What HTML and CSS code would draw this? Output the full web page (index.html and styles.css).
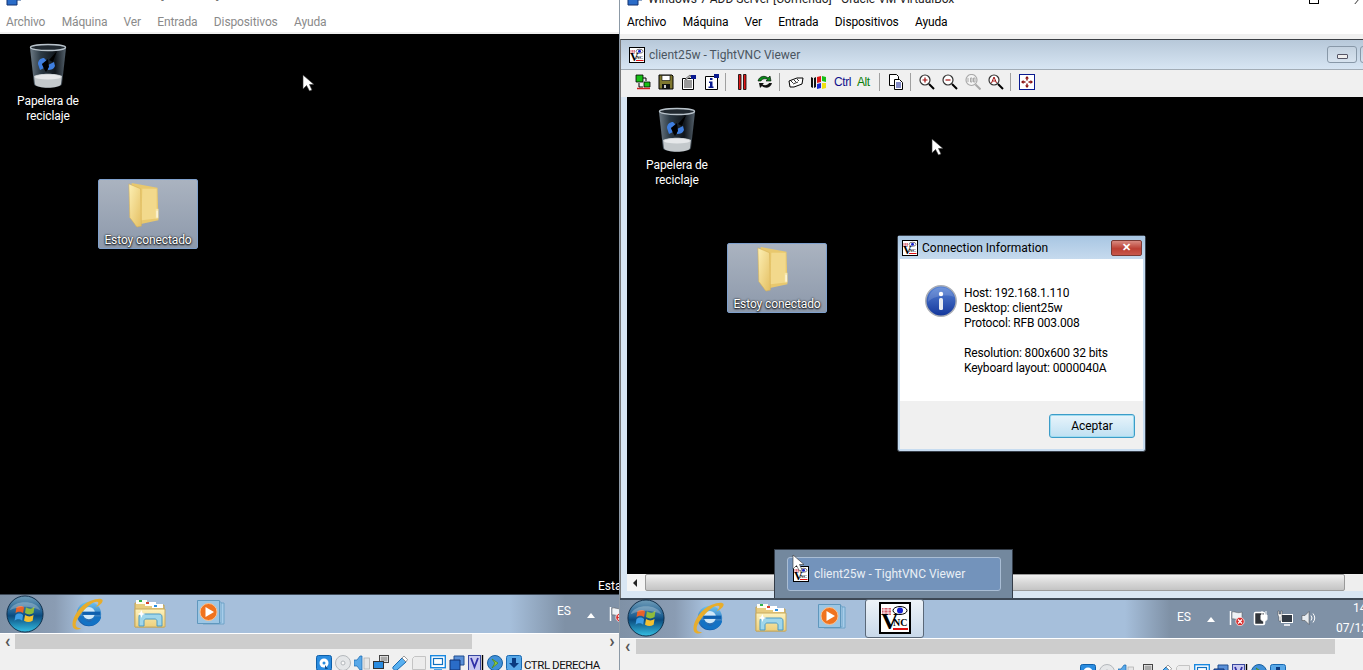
FILE: index.html
```html
<!DOCTYPE html>
<html lang="es">
<head>
<meta charset="utf-8">
<title>VirtualBox TightVNC</title>
<link rel="stylesheet" href="styles.css">
</head>
<body>
<svg class="defs" aria-hidden="true">
  <defs>
    <linearGradient id="gOrb" x1="0" y1="0" x2="0" y2="1"><stop offset="0" stop-color="#6f9cb8"/><stop offset=".45" stop-color="#1d5f92"/><stop offset=".55" stop-color="#0b4a7d"/><stop offset="1" stop-color="#35c0e4"/></linearGradient>
    <linearGradient id="gBin" x1="0" y1="0" x2="1" y2="0"><stop offset="0" stop-color="#6d7a85"/><stop offset=".3" stop-color="#2c3a45"/><stop offset=".7" stop-color="#10161c"/><stop offset="1" stop-color="#55626d"/></linearGradient>
    <linearGradient id="gFolder" x1="0" y1="0" x2="1" y2="1"><stop offset="0" stop-color="#fdf0b4"/><stop offset="1" stop-color="#e4bf62"/></linearGradient>
    <linearGradient id="gExp" x1="0" y1="0" x2="0" y2="1"><stop offset="0" stop-color="#fdf2bd"/><stop offset="1" stop-color="#ecd07e"/></linearGradient>
    <linearGradient id="gInfo" x1="0" y1="0" x2="0" y2="1"><stop offset="0" stop-color="#5a86d8"/><stop offset="1" stop-color="#12359a"/></linearGradient>
    <linearGradient id="gIe" x1="0" y1="0" x2="0" y2="1"><stop offset="0" stop-color="#6ec4f2"/><stop offset="1" stop-color="#0d4fa0"/></linearGradient>

    <symbol id="i-bin" viewBox="0 0 38 46">
      <path d="M1 5 C1 1 37 1 37 5 L33 41 C32 46 6 46 5 41 Z" fill="url(#gBin)"/>
      <ellipse cx="19" cy="4.500" rx="17.500" ry="3" fill="#20282f" stroke="#b9c3cb" stroke-width="1.400"/>
      <path d="M5 33 C10 30 28 30 33 33 L32 41 C31 46 7 46 6 41 Z" fill="#c4c9cc"/>
      <ellipse cx="19" cy="34" rx="13" ry="2.500" fill="#e6e8ea"/>
      <path d="M9 21 C9 17 12 15 15 15 L18 18 L13 21 L15 25 L11 27 Z M19 22 L25 19 L26 23 C25 26 22 27 19 27 Z" fill="#3f7fe0"/>
      <path d="M13 21 l6 -5 l1 8 l-3 5 l-2 -3 Z M20 17 l8 -9 l-4 11 Z" fill="#000"/>
    </symbol>
    <symbol id="i-folder" viewBox="0 0 38 48" preserveAspectRatio="none">
      <path d="M4 1 L33 6 L34 40 L8 45 Z" fill="#e8c86e"/>
      <path d="M16 7 L32 7 L32 38 L15 40 Z" fill="#f2d98c"/>
      <path d="M1 2 L14 7 L15 46 L10 47 L2 37 Z" fill="url(#gFolder)" stroke="#d8b255" stroke-width=".6"/>
      <path d="M31 28 h3 v10 h-3 z" fill="#f7e6a8"/><path d="M32 30 h1 v7 h-1 z" fill="#fff"/>
    </symbol>
    <symbol id="i-orb" viewBox="0 0 40 40">
      <circle cx="20" cy="20" r="19" fill="url(#gOrb)" stroke="#0f2c48" stroke-width="1"/>
      <path d="M11 13 C14 11 17 11 19 13 L18 19 C15 17 13 17 10 19 Z" fill="#e9622a"/>
      <path d="M21 13 C24 15 27 15 30 12 L29 19 C26 21 23 21 20 19 Z" fill="#8fbb3a"/>
      <path d="M10 21 C13 19 15 19 18 21 L17 27 C14 25 12 25 9 27 Z" fill="#3d9ee6"/>
      <path d="M20 21 C23 23 26 23 29 21 L28 27 C25 29 22 29 19 27 Z" fill="#f4c02f"/>
      <path d="M4 16 C8 5 32 5 36 16 C26 11 14 11 4 16 Z" fill="#fff" opacity=".25"/>
    </symbol>
    <symbol id="i-ie" viewBox="0 0 36 36">
      <circle cx="20" cy="18" r="13" fill="url(#gIe)"/>
      <circle cx="20" cy="17" r="6.500" fill="#cfe8f8"/>
      <rect x="13" y="15.500" width="19" height="3.500" fill="#0e5fae"/>
      <path d="M25 21 h8 c-1 6 -7 10 -13 9.500 c-6 0 -10 -5 -10.500 -10 l5 0 c.5 3 3 6 6 6 c2 0 4 -2 5 -5.500 Z" fill="#1372c4"/>
      <path d="M4 33 C-1 28 8 9 22 4 C28 1.500 34 1 34.500 3.500 C35 6 31 9 27 11 C30 8 31 5.500 29 5 C22 3.500 6 22 6 29 C6 32 9 33 12 33 C9 35 6 35 4 33 Z" fill="#e8ad2b"/>
    </symbol>
    <symbol id="i-exp" viewBox="0 0 32 30">
      <path d="M1 4 h10 l2 2 h17 v22 h-29 z" fill="#e8cc7e" stroke="#c0a258"/>
      <path d="M2 1 h11 v4 h-11 z" fill="#fdfdf5"/><path d="M5 1 h3 v2 h-3 z" fill="#33b24a"/>
      <path d="M11 3 h11 v4 h-11 z" fill="#fff"/><path d="M12 3 h3 v2 h-3 z" fill="#d8452c"/>
      <path d="M18 5 h11 v4 h-11 z" fill="#fff"/><path d="M20 6 h3 v2 h-3 z" fill="#2a8fe0"/>
      <path d="M1 10 h30 v18 h-30 z" fill="url(#gExp)" stroke="#c8aa60"/>
      <path d="M5 27 v-9 c0 -2 1 -3 3 -3 h17 c2 0 3 1 3 3 v9 h-5 v-5 c0 -1 -1 -2 -2 -2 h-9 c-1 0 -2 1 -2 2 v5 z" fill="#9fd6ea" stroke="#4b99c4"/>
      <path d="M6 14 l1.500 -3 l1 3 l3 1 l-3 1 l-1 3 l-1 -3 l-3 -1 z" fill="#fff"/>
    </symbol>
    <symbol id="i-wmp" viewBox="0 0 30 28">
      <path d="M6 3 h21 v21 h-21 z" fill="#a7cdea" stroke="#6fa3c8"/>
      <path d="M3 2 h21 v21 h-21 z" fill="#b5d6ee" stroke="#6fa3c8"/>
      <path d="M0.500 .500 h22 v23 h-22 z" fill="#9cc6e4" stroke="#5f97bd"/>
      <circle cx="11.500" cy="12" r="8.500" fill="#f0731f" stroke="#fbc08e"/>
      <path d="M8.500 7 L17 12 L8.500 17 Z" fill="#fff"/>
    </symbol>
    <symbol id="i-vnc" viewBox="0 0 32 32">
      <rect x="1" y="1" width="30" height="30" fill="#fff" stroke="#000" stroke-width="2"/>
      <path d="M3 6 h9 v7 h-9 z" fill="#c8283a" opacity=".75"/>
      <path d="M3 8 h9 M3 11 h9 M5 6 v7 M9 6 v7" stroke="#fff" stroke-width=".8"/>
      <ellipse cx="21" cy="8.500" rx="7" ry="4" fill="#fff" stroke="#000"/>
      <circle cx="21" cy="8.500" r="3" fill="#1520d0"/>
      <text x="2" y="27" class="vnc-v">V</text><text x="14" y="24" class="vnc-nc">NC</text>
      <rect x="14" y="26" width="15" height="2" fill="#e01010"/>
    </symbol>
    <symbol id="i-cursor" viewBox="0 0 13 18">
      <path d="M1 1 V15 L4.500 11.500 L7.500 17 L10 16 L7.500 10.500 L12 10.500 Z" fill="#fff" stroke="#333" stroke-width=".6"/>
    </symbol>
    <symbol id="i-info" viewBox="0 0 32 32">
      <circle cx="16" cy="16" r="15.200" fill="url(#gInfo)" stroke="#a9adb5" stroke-width="1.500"/>
      <path d="M3 17 C8 11 22 9 29 12 C27 5 21 2 15 2.500 C8 3 3 9 3 17 Z" fill="#fff" opacity=".15"/>
      <circle cx="16" cy="9" r="2.200" fill="#fff"/><rect x="14" y="13" width="4" height="12" rx="1.500" fill="#e8ecf2"/>
    </symbol>
    <symbol id="i-flag" viewBox="0 0 16 16">
      <path d="M1.500 1 v14" stroke="#fff" stroke-width="1.500"/><path d="M3 2 c3 -1 5 2 10 0 v7 c-5 2 -7 -1 -10 0 z" fill="#eef2f6" stroke="#555" stroke-width=".5"/>
      <circle cx="11" cy="11.500" r="4.200" fill="#d92a2a" stroke="#fff" stroke-width=".7"/><path d="M9 9.500 l4 4 m0 -4 l-4 4" stroke="#fff" stroke-width="1.200"/>
    </symbol>
    <symbol id="i-power" viewBox="0 0 16 16">
      <rect x="1.500" y="2.500" width="10" height="12" rx="1" fill="#30343a" stroke="#fff" stroke-width="1.500"/>
      <path d="M9 1 v4 M13 1 v4 M8 5 h6 v4 c0 1 -1 2 -3 2 s-3 -1 -3 -2 z" fill="#fff" stroke="#fff"/><path d="M11 11 v3" stroke="#fff" stroke-width="1.500"/>
    </symbol>
    <symbol id="i-net" viewBox="0 0 16 16">
      <rect x="4.500" y="4.500" width="11" height="8" fill="#333b45" stroke="#fff"/><path d="M7 15 h6" stroke="#fff" stroke-width="1.500"/>
      <path d="M1 1 h1 v3 h2 v-3 h1 v4 l-1 2 v4 h-2 v-4 l-1 -2 z" fill="#fff" stroke="#333" stroke-width=".4"/>
    </symbol>
    <symbol id="i-sound" viewBox="0 0 16 16">
      <path d="M1 5.500 h3 l4 -4 v13 l-4 -4 h-3 z" fill="#e8ecf0" stroke="#444" stroke-width=".5"/>
      <path d="M10 5.500 q2 2.500 0 5 M12 3.500 q3.500 4.500 0 9" stroke="#fff" fill="none"/>
    </symbol>

    <symbol id="t-conn" viewBox="0 0 16 16"><path d="M1 1 h7 v7 h-7 z" fill="#18c018" stroke="#000" stroke-width=".8"/><path d="M9 8 h6 v5 h-6 z" fill="#18c018" stroke="#000" stroke-width=".8"/><path d="M8 4 h3 v3 M4 9 v4 h4" fill="none" stroke="#000"/><path d="M2 14.500 h13" stroke="#d02020" stroke-width="1.500"/></symbol>
    <symbol id="t-save" viewBox="0 0 16 16"><path d="M1 1 h13 l1 1 v13 h-14 z" fill="#807830" stroke="#000"/><path d="M4 1.500 h8 v5 h-8 z" fill="#fff" stroke="#000" stroke-width=".6"/><path d="M4 10 h8 v5 h-8 z" fill="#111"/><path d="M6 11 h2 v3 h-2 z" fill="#ccc"/></symbol>
    <symbol id="t-prop" viewBox="0 0 16 16"><path d="M1.500 4.500 h11 v11 h-11 z" fill="#fff" stroke="#000"/><path d="M3 7 h8 M3 9 h8 M3 11 h8 M3 13 h8" stroke="#000" stroke-width=".8"/><path d="M10 1 h5 v4 h-5 z" fill="#0a1a90"/><path d="M4 5 l5 -4 l1 1 l-5 4 z" fill="#ddd" stroke="#000" stroke-width=".5"/></symbol>
    <symbol id="t-info" viewBox="0 0 16 16"><path d="M1.500 2.500 h9 l3 0 v13 h-12 z" fill="#fff" stroke="#000"/><path d="M10 0 h5 v4 h-5 z" fill="#0a1a90"/><path d="M6 4 h2.500 v2 h-2.500 z M5 7.500 h3.500 v5 h1 v1.500 h-5 v-1.500 h1.500 v-3.500 h-1 z" fill="#0a1a90"/></symbol>
    <symbol id="t-pause" viewBox="0 0 16 16"><path d="M4.500 0.500 h2.500 v15 h-2.500 z M9.500 .5 h2.500 v15 h-2.500 z" fill="#e01818" stroke="#000" stroke-width=".8"/></symbol>
    <symbol id="t-refresh" viewBox="0 0 16 16"><path d="M1 7 C2 2 8 1 11 4 L13 2 L14 7 H9 L10.500 5.500 C8 4 5 5 4 7 Z" fill="#0a8a1a" stroke="#000" stroke-width=".6"/><path d="M15 9 C14 14 8 15 5 12 L3 14 L2 9 H7 L5.500 10.500 C8 12 11 11 12 9 Z" fill="#111"/></symbol>
    <symbol id="t-cad" viewBox="0 0 16 16"><path d="M1 7 l8 -3 l6 0 l-1 6 l-8 3 h-4 z" fill="#fff" stroke="#000"/><path d="M3 7 l2 2 M6 6 l2 2 M9 5 l2 2 M5 10 l5 -2" stroke="#000" stroke-width=".8"/></symbol>
    <symbol id="t-win" viewBox="0 0 16 16"><path d="M0 3 l2 1 v10 l-2 -1 z M3 4 l2 -1 v10 l-2 1 z" fill="#111"/><path d="M6 3 l4 -1 v6 l-4 1 z" fill="#e01818"/><path d="M11 2 l4 1 v5 l-4 -1 z" fill="#18c018"/><path d="M6 10 l4 -1 v5 l-4 1 z" fill="#1828d0"/><path d="M11 9 l4 0 v5 l-4 1 z" fill="#f0e010"/></symbol>
    <symbol id="t-clip" viewBox="0 0 16 16"><path d="M1.500 .5 h7 l2 2 v9 h-9 z" fill="#fff" stroke="#000"/><path d="M6.500 5.500 h5 l3 3 v7 h-8 z" fill="#fff" stroke="#000"/><path d="M8 9 h5 M8 11 h5 M8 13 h5" stroke="#0a1a90"/></symbol>
    <symbol id="t-zin" viewBox="0 0 16 16"><circle cx="6" cy="6" r="5" fill="#fff" stroke="#333" stroke-width="1.200"/><path d="M3.500 6 h5 M6 3.500 v5" stroke="#a01010" stroke-width="1.200"/><path d="M10 10 l5 5" stroke="#000" stroke-width="2"/></symbol>
    <symbol id="t-zout" viewBox="0 0 16 16"><circle cx="6" cy="6" r="5" fill="#fff" stroke="#333" stroke-width="1.200"/><path d="M3.500 6 h5" stroke="#a01010" stroke-width="1.200"/><path d="M10 10 l5 5" stroke="#000" stroke-width="2"/></symbol>
    <symbol id="t-z100" viewBox="0 0 16 16"><circle cx="6.500" cy="6" r="5.500" fill="#f4f4f4" stroke="#aaa" stroke-width="1.200"/><path d="M3 4 v4 M5.500 4 h1.500 v4 h-1.500 z M8.500 4 h1.500 v4 h-1.500 z" fill="none" stroke="#aaa"/><path d="M10.500 10.500 l5 5" stroke="#aaa" stroke-width="2"/></symbol>
    <symbol id="t-zauto" viewBox="0 0 16 16"><circle cx="6" cy="6" r="5" fill="#fff" stroke="#333" stroke-width="1.200"/><path d="M3.500 9 L6 3 L8.500 9 M4.500 7 h3" fill="none" stroke="#a01010"/><path d="M10 10 l5 5" stroke="#000" stroke-width="2"/></symbol>
    <symbol id="t-full" viewBox="0 0 16 16"><rect x=".5" y=".5" width="15" height="15" fill="#fff" stroke="#0a1a90"/><path d="M8 2 l2 2.500 h-1.300 v2 h-1.400 v-2 h-1.300 z M8 14 l2 -2.500 h-1.300 v-2 h-1.400 v2 h-1.300 z M2 8 l2.500 -2 v1.300 h2 v1.400 h-2 v1.300 z M14 8 l-2.500 -2 v1.300 h-2 v1.400 h2 v1.300 z" fill="#8a1010"/></symbol>

    <symbol id="s-hd" viewBox="0 0 16 16"><rect x=".5" y=".5" width="15" height="15" rx="2" fill="#2a8ce0" stroke="#0f5fa8"/><circle cx="8" cy="8" r="4.500" fill="#fff"/><circle cx="8" cy="8" r="1.500" fill="#2a8ce0"/><path d="M9 10 l3 4 h-3 z" fill="#0f4f90"/></symbol>
    <symbol id="s-cd" viewBox="0 0 16 16"><circle cx="8" cy="8" r="7.500" fill="#e4e6e8" stroke="#b4b8bc"/><circle cx="8" cy="8" r="2" fill="#f8f8f8" stroke="#b4b8bc"/></symbol>
    <symbol id="s-audio" viewBox="0 0 16 16"><path d="M0 5 h3 l3 -4 h2 v14 h-2 l-3 -4 h-3 z" fill="#58a8e8" stroke="#1868b0" stroke-width=".7"/><rect x="10" y="3" width="5.500" height="11" fill="#e6e6e6" stroke="#aaa" stroke-width=".7"/></symbol>
    <symbol id="s-net" viewBox="0 0 16 16"><rect x="6.500" y=".5" width="9" height="7" fill="#fff" stroke="#444"/><rect x="7.500" y="1.500" width="7" height="5" fill="#aaa"/><rect x=".5" y="6.500" width="10" height="7" fill="#2a8ce0" stroke="#333"/><path d="M3 15.500 h6" stroke="#333"/></symbol>
    <symbol id="s-usb" viewBox="0 0 16 16"><path d="M1 12 L10 3 L14 7 L5 15 C3 16 0 14 1 12 Z" fill="#58b0f0" stroke="#1868b0"/><path d="M10 3 L12 1 L15.500 4.500 L14 7 Z" fill="#fff" stroke="#777" stroke-width=".7"/></symbol>
    <symbol id="s-share" viewBox="0 0 16 16"><path d="M1.500 3.500 l2 -2 h11 v13 h-13 z" fill="#ececec" stroke="#c4c4c4"/></symbol>
    <symbol id="s-screen" viewBox="0 0 16 16"><rect x=".7" y=".7" width="14.600" height="12" fill="#fff" stroke="#1888e0" stroke-width="1.400"/><rect x="3.500" y="3.500" width="9" height="6" fill="#fff" stroke="#1070c0" stroke-width="1.200"/><path d="M4 15 h8" stroke="#1888e0" stroke-width="1.500"/></symbol>
    <symbol id="s-screens" viewBox="0 0 16 16"><path d="M5 1 h10 v9 h-10 z" fill="#5a90d8" stroke="#204f90"/><path d="M1 5 h10 v10 h-10 z" fill="#2a6cc8" stroke="#103070"/></symbol>
    <symbol id="s-v" viewBox="0 0 16 16"><rect x=".5" y=".5" width="12" height="15" fill="#c8c8f0" stroke="#3848a0"/><path d="M3 3 L6.500 12 L10 3" fill="none" stroke="#3030a8" stroke-width="1.800"/><path d="M14.500 0 v16" stroke="#000" stroke-width="1.400"/></symbol>
    <symbol id="s-globe" viewBox="0 0 16 16"><circle cx="8" cy="8" r="7.500" fill="#3f90d8" stroke="#1860a0"/><path d="M5 4 L11 8 L5 13 L8 8 Z" fill="#9ad040" stroke="#4c8a18" stroke-width=".8"/></symbol>
    <symbol id="s-down" viewBox="0 0 16 16"><rect x=".5" y=".5" width="15" height="15" rx="2" fill="#58a8e8" stroke="#1868b0"/><path d="M6 3 h4 v5 h3 L8 13 L3 8 h3 z" fill="#0a3a80"/></symbol>
  </defs>
</svg>

<main class="stage">
  <section class="vm vm-client">
    <header class="vm-title vm-title-off"><svg class="vm-icon"><use href="#s-screens"/></svg><span class="vm-title-text vm-title-client">Windows 7 Cliente [Corriendo] - Oracle VM VirtualBox</span></header>
    <nav class="vm-menu vm-menu-off"><span>Archivo</span><span>Máquina</span><span>Ver</span><span>Entrada</span><span>Dispositivos</span><span>Ayuda</span></nav>
    <div class="screen">
      <div class="desk">
        <div class="desk-item desk-bin"><svg class="bin-img"><use href="#i-bin"/></svg><span>Papelera de<br>reciclaje</span></div>
        <div class="desk-item desk-folder"><svg class="folder-img"><use href="#i-folder"/></svg><span>Estoy conectado</span></div>
        <svg class="cursor cursor-desk"><use href="#i-cursor"/></svg>
      </div>
      <span class="status-clip">Estado</span>
    </div>
    <div class="taskbar taskbar-client">
      <svg class="orb"><use href="#i-orb"/></svg>
      <svg class="tb-ie"><use href="#i-ie"/></svg>
      <svg class="tb-exp"><use href="#i-exp"/></svg>
      <svg class="tb-wmp"><use href="#i-wmp"/></svg>
      <span class="tray-lang tray-lang-client">ES</span>
      <span class="tray-up"></span>
      <svg class="tray-icon tray-flag-client"><use href="#i-flag"/></svg>
    </div>
    <div class="hscroll hscroll-client"><span class="h-arrow">‹</span><span class="h-track h-track-client"></span><span class="h-arrow h-arrow-right">›</span></div>
    <footer class="vm-status vm-status-client">
      <svg class="st"><use href="#s-hd"/></svg><svg class="st"><use href="#s-cd"/></svg><svg class="st"><use href="#s-audio"/></svg><svg class="st"><use href="#s-net"/></svg><svg class="st"><use href="#s-usb"/></svg><svg class="st"><use href="#s-share"/></svg><svg class="st"><use href="#s-screen"/></svg><svg class="st"><use href="#s-screens"/></svg><svg class="st"><use href="#s-v"/></svg><svg class="st"><use href="#s-globe"/></svg><svg class="st"><use href="#s-down"/></svg><span class="st-key">CTRL DERECHA</span>
    </footer>
  </section>

  <section class="vm vm-server">
    <header class="vm-title"><svg class="vm-icon"><use href="#s-screens"/></svg><span class="vm-title-text">Windows 7 ADD Server [Corriendo] - Oracle VM VirtualBox</span><span class="vm-spacer"></span><span class="vm-max"></span><span class="vm-close"></span></header>
    <nav class="vm-menu"><span>Archivo</span><span>Máquina</span><span>Ver</span><span>Entrada</span><span>Dispositivos</span><span>Ayuda</span></nav>
    <div class="menu-strip"></div>
    <div class="screen screen-server">
      <div class="vnc">
        <div class="vnc-title">
          <svg class="vnc-app-icon"><use href="#i-vnc"/></svg>
          <span class="vnc-title-text">client25w - TightVNC Viewer</span>
          <span class="vm-spacer"></span>
          <span class="cap-btn"><i class="cap-min"></i></span>
          <span class="cap-btn"><i class="cap-res"></i></span>
        </div>
        <div class="vnc-tools">
          <svg class="tool"><use href="#t-conn"/></svg><svg class="tool"><use href="#t-save"/></svg><svg class="tool"><use href="#t-prop"/></svg><svg class="tool"><use href="#t-info"/></svg>
          <i class="sep sep-first"></i>
          <svg class="tool"><use href="#t-pause"/></svg><svg class="tool"><use href="#t-refresh"/></svg>
          <i class="sep"></i>
          <svg class="tool"><use href="#t-cad"/></svg><svg class="tool"><use href="#t-win"/></svg><span class="tool tool-ctrl">Ctrl</span><span class="tool tool-alt">Alt</span>
          <i class="sep"></i>
          <svg class="tool"><use href="#t-clip"/></svg>
          <i class="sep"></i>
          <svg class="tool"><use href="#t-zin"/></svg><svg class="tool"><use href="#t-zout"/></svg><svg class="tool"><use href="#t-z100"/></svg><svg class="tool"><use href="#t-zauto"/></svg>
          <i class="sep"></i>
          <svg class="tool"><use href="#t-full"/></svg>
        </div>
        <div class="vnc-view">
          <div class="desk desk-remote">
            <div class="desk-item desk-bin"><svg class="bin-img"><use href="#i-bin"/></svg><span>Papelera de<br>reciclaje</span></div>
            <div class="desk-item desk-folder"><svg class="folder-img"><use href="#i-folder"/></svg><span>Estoy conectado</span></div>
            <svg class="cursor cursor-desk"><use href="#i-cursor"/></svg>
          </div>
        </div>
        <div class="vnc-scroll"><span class="vs-arrow"></span><span class="vs-thumb"></span></div>
      </div>

      <div class="dialog">
        <div class="dlg-title">
          <svg class="dlg-icon"><use href="#i-vnc"/></svg>
          <span class="dlg-title-text">Connection Information</span>
          <span class="vm-spacer"></span>
          <span class="dlg-close">✕</span>
        </div>
        <div class="dlg-body">
          <svg class="dlg-info"><use href="#i-info"/></svg>
          <p class="dlg-text">Host: 192.168.1.110<br>Desktop: client25w<br>Protocol: RFB 003.008<br><br>Resolution: 800x600 32 bits<br>Keyboard layout: 0000040A</p>
        </div>
        <div class="dlg-foot"><button class="dlg-btn">Aceptar</button></div>
      </div>

      <div class="peek">
        <div class="peek-item"><svg class="peek-icon"><use href="#i-vnc"/></svg><span>client25w - TightVNC Viewer</span></div>
      </div>
      <svg class="cursor cursor-peek"><use href="#i-cursor"/></svg>
    </div>
    <div class="taskbar taskbar-server">
      <svg class="orb"><use href="#i-orb"/></svg>
      <svg class="tb-ie"><use href="#i-ie"/></svg>
      <svg class="tb-exp"><use href="#i-exp"/></svg>
      <svg class="tb-wmp"><use href="#i-wmp"/></svg>
      <span class="tb-vnc"><svg class="tb-vnc-img"><use href="#i-vnc"/></svg></span>
      <span class="vm-spacer"></span>
      <span class="tray-lang">ES</span>
      <span class="tray-up"></span>
      <svg class="tray-icon"><use href="#i-flag"/></svg><svg class="tray-icon"><use href="#i-power"/></svg><svg class="tray-icon"><use href="#i-net"/></svg><svg class="tray-icon"><use href="#i-sound"/></svg>
      <span class="clock">14:25<br>07/12/2017</span>
    </div>
    <div class="hscroll hscroll-server"><span class="h-arrow">‹</span><span class="h-track h-track-server"></span></div>
    <footer class="vm-status vm-status-server">
      <svg class="st"><use href="#s-hd"/></svg><svg class="st"><use href="#s-cd"/></svg><svg class="st"><use href="#s-audio"/></svg><svg class="st"><use href="#s-net"/></svg><svg class="st"><use href="#s-usb"/></svg><svg class="st"><use href="#s-share"/></svg><svg class="st"><use href="#s-screen"/></svg><svg class="st"><use href="#s-screens"/></svg><svg class="st"><use href="#s-v"/></svg><svg class="st"><use href="#s-globe"/></svg><svg class="st"><use href="#s-down"/></svg><span class="st-key">CTRL DERECHA</span>
    </footer>
  </section>
</main>
</body>
</html>
```

FILE: styles.css
```css
* { box-sizing: border-box; }
html, body { margin: 0; height: 100%; overflow: hidden; background: #fff; }
body { font-family: Roboto, "Noto Sans", sans-serif; font-size: 12px; color: #000; }
.defs { position: absolute; width: 0; height: 0; }
.vnc-v { font: bold 24px "Liberation Serif", serif; fill: #000; }
.vnc-nc { font: bold 10px "Liberation Serif", serif; fill: #000; }
svg { display: block; flex: none; }

.stage { position: relative; width: 1363px; height: 670px; overflow: hidden; }
.vm { position: absolute; top: 0; height: 670px; display: flex; flex-direction: column; overflow: hidden; background: #fff; }
.vm-client { left: 0; width: 619px; }
.vm-server { left: 619px; width: 744px; border-left: 1px solid #8c99a6; }

.vm-title { height: 12px; flex: none; display: flex; align-items: flex-start; padding-left: 7px; overflow: hidden; }
.vm-icon { width: 16px; height: 16px; margin-top: -10px; }
.vm-title-text { margin: -9px 0 0 5px; line-height: 16px; font-size: 12px; white-space: nowrap; color: #222; }
.vm-title-client { margin: -13px 0 0 37px; color: #777; }
.vm-title-off { padding-left: 6px; }
.vm-spacer { flex: 1; }
.vm-max { width: 10px; height: 4px; border: 1px solid #000; border-top: 0; margin-right: 37px; }
.vm-close { width: 7px; height: 4px; border-left: 1px solid #333; transform: skewX(-40deg); }

.vm-menu { height: 22px; flex: none; display: flex; gap: 16.300px; padding: 0 0 0 7px; line-height: 20px; font-size: 12px; letter-spacing: -.12px; white-space: nowrap; background: #fff; }
.vm-menu-off { color: #8a8a8a; padding-left: 6px; border-bottom: 2px solid #f0f0f0; }
.menu-strip { height: 5px; flex: none; background: #f0f0f0; }

.screen { position: relative; flex: 1; min-height: 0; background: #000; }
.status-clip { position: absolute; right: 0; bottom: 0; width: 21px; overflow: hidden; color: #fff; font-size: 12px; line-height: 16px; }
.desk { position: absolute; inset: 0; }
.desk-remote { left: 2px; top: 1px; }
.desk-item { position: absolute; width: 100px; display: flex; flex-direction: column; align-items: center; color: #fff; font-size: 12px; letter-spacing: -.1px; line-height: 15px; text-align: center; text-shadow: 0 1px 2px #000; }
.desk-bin { left: -2px; top: 9px; }
.bin-img { width: 38px; height: 46px; margin-bottom: 5px; }
.desk-folder { left: 98px; top: 145px; height: 70px; border: 1px solid #7fa0cc; border-radius: 2px; background: linear-gradient(#aab3c0, #8d99ab); text-shadow: 0 0 2px #000, 0 1px 2px #000; }
.folder-img { width: 34px; height: 46px; margin: 2px 6px 5px 0; }
.cursor { position: absolute; }
.cursor-desk { left: 302px; top: 40px; width: 13px; height: 18px; }
.cursor-peek { left: 172px; top: 515px; width: 13px; height: 18px; }

.taskbar { height: 40px; flex: none; position: relative; display: flex; align-items: center; border-top: 1px solid #3d4855; border-bottom: 1px solid #fff; }
.taskbar-client { padding-left: 6px; background: linear-gradient(90deg, #7f91a6 0, #8a9cb3 55px, #a6bfdb 85px, #a6bfdb 510px, #7f91a6 565px); }
.taskbar-server { height: 41px; border-top: 2px solid #3d4855; background: linear-gradient(90deg, #7f91a6 0, #8a9cb3 55px, #a6bfdb 85px, #a6bfdb 505px, #7f91a6 550px); padding: 0 0 2px 7px; }
.orb { width: 38px; height: 38px; }
.tb-ie { width: 34px; height: 34px; margin-left: 26px; }
.tb-exp { width: 32px; height: 30px; margin-left: 30px; }
.tb-wmp { width: 30px; height: 28px; margin-left: 31px; }
.tb-vnc { width: 59px; height: 39px; margin-left: 17px; display: flex; align-items: center; justify-content: center; border: 1px solid #5a6878; border-radius: 3px; background: linear-gradient(#eef3f8, #c9d9ea); }
.tb-vnc-img { width: 32px; height: 32px; }
.tray-lang { color: #fff; font-size: 12px; margin-top: -3px; }
.tray-lang-client { margin-left: 330px; margin-top: -7px; }
.tray-up { width: 0; height: 0; border: 4px solid transparent; border-top: 0; border-bottom: 5px solid #fff; margin: 2px 0 0 16px; }
.tray-icon { width: 16px; height: 16px; margin-left: 8px; }
.tray-up + .tray-icon { margin-left: 14px; }
.clock { width: 47px; margin-left: 19px; margin-right: -20px; color: #fff; text-align: right; font-size: 12px; line-height: 20px; white-space: nowrap; overflow: hidden; }

.hscroll { height: 16px; flex: none; display: flex; background: #f0f0f0; }
.h-arrow { width: 15px; text-align: center; color: #555; font-size: 18px; font-weight: 700; line-height: 13px; }
.h-arrow-right { margin-left: auto; width: 14px; }
.h-track { background: #cdcdcd; height: 15px; }
.h-track-client { width: 457px; }
.h-track-server { width: 699px; margin-left: 1px; }
.vm-status { flex: none; display: flex; background: #f0f0f0; overflow: hidden; align-items: flex-start; gap: 3px; }
.vm-status-client { height: 20px; padding: 5px 0 0 316px; }
.vm-status-server { height: 15px; padding: 9px 0 0 460px; }
.st { width: 16px; height: 16px; }
.st-key { font-size: 11.500px; letter-spacing: -.45px; line-height: 12px; margin: 4px 0 0 -1px; white-space: nowrap; color: #111; }

.vnc { position: absolute; left: 0; top: 0; width: 770px; height: 559px; display: flex; flex-direction: column; background: #d9e6f3; border-top: 1px solid #3b3f44; border-left: 1px solid #777; padding-left: 6px; }
.vnc-title { height: 30px; flex: none; margin-left: -6px; padding-left: 8px; display: flex; align-items: center; background: linear-gradient(#b7c8d9, #d7e5f3); border-bottom: 1px solid #a2acb6; }
.vnc-app-icon { width: 16px; height: 16px; }
.vnc-title-text { margin-left: 4px; font-size: 12px; color: #4a5560; }
.cap-btn { width: 30px; height: 17px; margin-left: 3px; display: flex; align-items: center; justify-content: center; border: 1px solid #8898a8; border-radius: 3px; background: linear-gradient(#c4d2e0, #d7e3ef); }
.cap-min { display: block; width: 11px; height: 5px; background: #eee; border: 1px solid #556; border-radius: 1px; margin-top: 3px; }
.cap-res { display: block; width: 11px; height: 8px; background: #ddd; border: 2px solid #556; }
.vnc-tools { height: 27px; flex: none; margin-left: -6px; padding: 0 0 4px 14px; display: flex; align-items: center; gap: 7px; background: #f0f0f0; }
.tool { width: 16px; height: 16px; flex: none; }
.tool-ctrl, .tool-alt { font-family: "Liberation Sans", sans-serif; font-size: 12px; line-height: 16px; letter-spacing: -.4px; white-space: nowrap; }
.tool-ctrl { color: #10108c; }
.tool-alt { color: #0a800a; }
.sep { width: 1px; height: 18px; background: #a0a0a0; margin: 0 1px 0 -1px; }
.sep-first { margin-left: -2px; }
.vnc-view { position: relative; flex: 1; background: #000; min-height: 0; }
.vnc-scroll { height: 17px; flex: none; display: flex; background: #eee; margin-bottom: 7px; }
.vs-arrow { width: 18px; height: 17px; position: relative; background: #f4f4f4; }
.vs-arrow::before { content: ""; position: absolute; left: 6px; top: 5px; border: 4px solid transparent; border-left: 0; border-right: 4px solid #222; }
.vs-thumb { width: 700px; background: linear-gradient(#f1f1f1, #d8d8d8 50%, #c4c4c4); border: 1px solid #9a9a9a; border-radius: 2px; }

.dialog { position: absolute; left: 277px; top: 196px; width: 249px; height: 217px; display: flex; flex-direction: column; border: 1px solid #39404a; border-radius: 3px; background: #c7dcf0; padding: 0 2px 2px; }
.dlg-title { height: 23px; flex: none; display: flex; align-items: center; margin: 0 -2px; padding: 0 3px 0 4px; background: linear-gradient(#a8c6e2, #c6daee); }
.dlg-icon { width: 16px; height: 16px; }
.dlg-title-text { margin-left: 4px; font-size: 12px; color: #000; }
.dlg-close { width: 31px; height: 16px; border: 1px solid #7a3a34; border-radius: 2px; background: linear-gradient(#d88a80, #bb3f33 55%, #c8584c); color: #fff; font-size: 11px; font-weight: 700; line-height: 14px; text-align: center; }
.dlg-body { height: 142px; flex: none; display: flex; background: #fff; padding: 26px 0 0 25px; }
.dlg-info { width: 32px; height: 32px; }
.dlg-text { margin: 1px 0 0 7px; font-size: 12px; letter-spacing: -.16px; line-height: 15px; white-space: nowrap; }
.dlg-foot { flex: 1; display: flex; align-items: flex-end; justify-content: flex-end; padding: 0 8px 11px 0; background: #f0f0f0; }
.dlg-btn { width: 86px; height: 24px; border: 1px solid #3c9cc8; border-radius: 3px; background: linear-gradient(#e8f4fb, #bfe0f2); font: 12px Roboto, sans-serif; color: #000; padding: 0; box-shadow: inset 0 0 0 1px #9fdcf0; }

.peek { position: absolute; left: 154px; top: 510px; width: 239px; height: 49px; padding: 7px 11px 7px 12px; background: #73889e; border: 1px solid #333c48; border-bottom: 0; }
.peek-item { height: 34px; display: flex; align-items: center; padding-left: 5px; gap: 5px; color: #e9eff5; font-size: 12px; border: 1px solid #a9bdd4; border-radius: 3px; background: #7393bb; }
.peek-icon { width: 16px; height: 16px; }
```
